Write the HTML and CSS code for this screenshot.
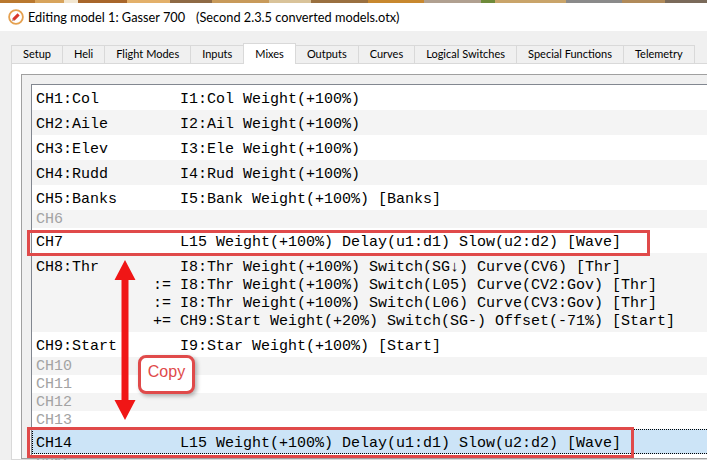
FILE: index.html
```html
<!DOCTYPE html>
<html>
<head>
<meta charset="utf-8">
<link rel="stylesheet" href="styles.css">
</head>
<body>
<div class="strip"></div>
<div class="titlebar">
  <svg class="app-icon" viewBox="0 0 16 16"><circle cx="8" cy="8" r="6.9" fill="#fff" stroke="#e5a150" stroke-width="1.8"/><path d="M5.4 10.6 L10.6 5.4" stroke="#d9362b" stroke-width="3"/><path d="M4.2 11.8 L4.7 9.9 L6.1 11.3 Z" fill="#7a3b2a"/></svg>
  <span class="title">Editing model 1: Gasser 700</span><span class="title sub">(Second 2.3.5 converted models.otx)</span>
</div>
<div class="tabs">
  <div class="tab">Setup</div>
  <div class="tab">Heli</div>
  <div class="tab">Flight Modes</div>
  <div class="tab">Inputs</div>
  <div class="tab active">Mixes</div>
  <div class="tab">Outputs</div>
  <div class="tab">Curves</div>
  <div class="tab">Logical Switches</div>
  <div class="tab">Special Functions</div>
  <div class="tab">Telemetry</div>
</div>
<div class="pane">
  <div class="frame">
    <div class="list">
      <div class="row"><span class="ch">CH1:Col</span><div class="lines"><div class="ln"><span class="op"></span>I1:Col Weight(+100%)</div></div></div>
      <div class="row alt"><span class="ch">CH2:Aile</span><div class="lines"><div class="ln"><span class="op"></span>I2:Ail Weight(+100%)</div></div></div>
      <div class="row"><span class="ch">CH3:Elev</span><div class="lines"><div class="ln"><span class="op"></span>I3:Ele Weight(+100%)</div></div></div>
      <div class="row alt"><span class="ch">CH4:Rudd</span><div class="lines"><div class="ln"><span class="op"></span>I4:Rud Weight(+100%)</div></div></div>
      <div class="row"><span class="ch">CH5:Banks</span><div class="lines"><div class="ln"><span class="op"></span>I5:Bank Weight(+100%) [Banks]</div></div></div>
      <div class="row alt empty"><span class="ch">CH6</span></div>
      <div class="row"><span class="ch">CH7</span><div class="lines"><div class="ln"><span class="op"></span>L15 Weight(+100%) Delay(u1:d1) Slow(u2:d2) [Wave]</div></div></div>
      <div class="row alt"><span class="ch">CH8:Thr</span><div class="lines">
        <div class="ln"><span class="op"></span>I8:Thr Weight(+100%) Switch(SG↓) Curve(CV6) [Thr]</div>
        <div class="ln"><span class="op">:=</span>I8:Thr Weight(+100%) Switch(L05) Curve(CV2:Gov) [Thr]</div>
        <div class="ln"><span class="op">:=</span>I8:Thr Weight(+100%) Switch(L06) Curve(CV3:Gov) [Thr]</div>
        <div class="ln"><span class="op">+=</span>CH9:Start Weight(+20%) Switch(SG-) Offset(-71%) [Start]</div>
      </div></div>
      <div class="row"><span class="ch">CH9:Start</span><div class="lines"><div class="ln"><span class="op"></span>I9:Star Weight(+100%) [Start]</div></div></div>
      <div class="row alt empty"><span class="ch">CH10</span></div>
      <div class="row empty"><span class="ch">CH11</span></div>
      <div class="row alt empty"><span class="ch">CH12</span></div>
      <div class="row empty"><span class="ch">CH13</span></div>
      <div class="row sel"><span class="ch">CH14</span><div class="lines"><div class="ln"><span class="op"></span>L15 Weight(+100%) Delay(u1:d1) Slow(u2:d2) [Wave]</div></div></div>
      <div class="row empty"><span class="ch">CH15</span></div>
      <div class="row alt empty"><span class="ch">CH16</span></div>
    </div>
  </div>
</div>

<div class="mark mark-a"></div>
<div class="mark mark-b"></div>
<svg class="arrow" viewBox="0 0 22 162"><polygon points="11,1 21.5,21 14.5,21 14.5,141 21.5,141 11,161 0.5,141 7.5,141 7.5,21 0.5,21" fill="#f01616"/></svg>
<div class="callout">Copy</div>
</body>
</html>
```

FILE: styles.css
```css
* { box-sizing: border-box; }
html, body { margin: 0; padding: 0; }
body {
  width: 707px;
  height: 460px;
  overflow: hidden;
  position: relative;
  background: #f0f0f0;
  font-family: "Segoe UI", Lato, "Liberation Sans", sans-serif;
  color: #000;
}

.strip {
  height: 3px;
  background: linear-gradient(90deg, #b9782f 0 5%, #d8a45c 5% 9%, #f2e6d0 9% 11%, #a8662a 11% 18%, #e3b06a 18% 24%, #8e6a45 24% 30%, #c89a5a 30% 38%, #d9c39a 38% 44%, #9a7040 44% 52%, #c8882f 52% 60%, #b0a090 60% 68%, #6e8a3a 68% 70%, #c9a46a 70% 80%, #8a8a8a 80% 88%, #b08a5a 88% 94%, #7a6a5a 94% 100%);
}

.titlebar {
  height: 28px;
  background: #fff;
  display: flex;
  align-items: center;
  padding-left: 8px;
  font-size: 12.75px;
  white-space: nowrap;
}
.app-icon { width: 16px; height: 16px; margin-right: 4px; flex: none; }
.title.sub { margin-left: 11px; }

.tabs {
  display: flex;
  align-items: flex-end;
  height: 20px;
  margin-top: 12px;
  padding-left: 11px;
}
.tab {
  height: 18px;
  padding: 0 11px;
  margin-left: -1px;
  border: 1px solid #d9d9d9;
  border-bottom: none;
  background: #f0f0f0;
  font-size: 11px;
  line-height: 16px;
  white-space: nowrap;
}
.tab:first-child { margin-left: 0; }
.tab.active {
  height: 21px;
  margin-bottom: -1px;
  padding-top: 2px;
  background: #fff;
  position: relative;
  z-index: 1;
}

.pane {
  margin-left: 11px;
  margin-right: -30px;
  height: 397px;
  border: 1px solid #d9d9d9;
  background: #fff;
  padding: 10px 0 0 9px;
}
.frame {
  height: 100%;
  border: 1px solid #a0a0a0;
  background: #f0f0f0;
  padding: 9px 0 0 9px;
}
.list {
  height: 100%;
  border-top: 1px solid #828790;
  border-left: 1px solid #828790;
  background: #fff;
  font-family: "Liberation Mono", "Courier New", monospace;
  font-size: 15px;
  color: #000;
}

.row {
  display: flex;
  padding: 6px 0 1px 4px;
  line-height: 18px;
  white-space: nowrap;
}
.row.alt { background: #f4f4f4; }
.row.empty {
  height: 18px;
  padding-top: 1px;
  padding-bottom: 0;
  color: #a3a3a3;
}
.row.sel {
  background: #cce4f7;
  outline: 1px dotted #000;
  outline-offset: -1px;
}
.ch { width: 13ch; flex: none; }
.ln { height: 18px; }
.op { display: inline-block; width: 3ch; }

.mark {
  position: absolute;
  border: 3px solid #e04a4a;
}
.mark-a { left: 27px; top: 230px; width: 623px; height: 26px; }
.mark-b { left: 27px; top: 427px; width: 607px; height: 31px; }

.arrow {
  position: absolute;
  left: 114px;
  top: 259px;
  width: 22px;
  height: 162px;
}

.callout {
  position: absolute;
  left: 138px;
  top: 355px;
  width: 57px;
  height: 39px;
  border: 3px solid #e04a4a;
  border-radius: 8px;
  background: #fff;
  box-shadow: 2px 2px 4px rgba(0, 0, 0, 0.3);
  color: #e04a4a;
  font-family: "Liberation Sans", Arial, sans-serif;
  font-size: 16px;
  display: flex;
  align-items: center;
  justify-content: center;
  padding-bottom: 5px;
}
```
